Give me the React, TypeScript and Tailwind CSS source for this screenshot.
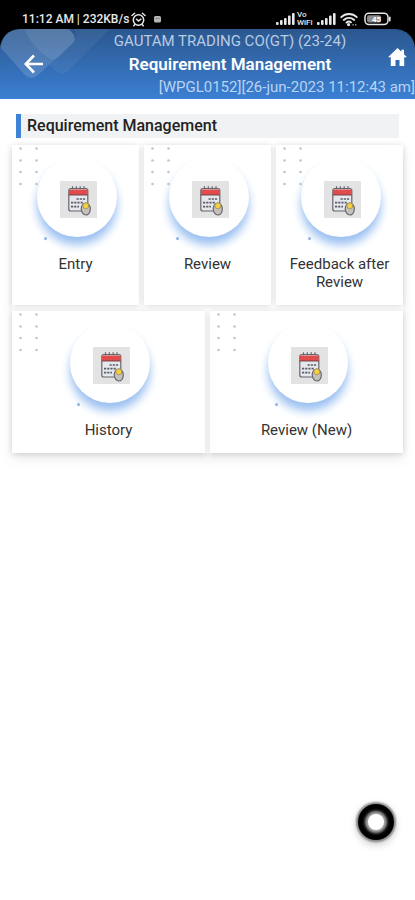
import React from "react";

const topItems = ["Entry", "Review", "Feedback after Review"];
const bottomItems = ["History", "Review (New)"];

function SignalIcon() {
  return (
    <svg width="19" height="14" viewBox="0 0 19 14" fill="#e8e8e8">
      <rect x="0" y="10" width="2.6" height="3" rx="1" />
      <rect x="4" y="8" width="2.6" height="5" rx="1" />
      <rect x="8" y="6" width="2.6" height="7" rx="1" />
      <rect x="12" y="3.5" width="2.6" height="9.5" rx="1" />
      <rect x="16" y="1" width="2.6" height="12" rx="1" />
    </svg>
  );
}

function StatusBar() {
  return (
    <div className="flex h-[29px] items-end justify-between bg-black pr-6 pb-[2px] pl-[22px] text-[#e8e8e8]">
      <div className="flex h-4 items-center gap-0.5">
        <span className="text-[12px] font-medium whitespace-nowrap">
          11:12 AM | 232KB/s
        </span>
        <svg
          width="15"
          height="15"
          viewBox="0 0 15 15"
          fill="none"
          stroke="#e8e8e8"
          strokeWidth="1.5"
          strokeLinecap="round"
        >
          <circle cx="7.5" cy="8" r="5.2" />
          <path d="M1 3.5 3.6 1.3M14 3.5l-2.6-2.2M5.5 7.2l2 1.8 2.4-1.8M3.8 12.6l-1 1.2M11.2 12.6l1 1.2" />
        </svg>
        <svg width="8" height="8" viewBox="0 0 8 8" className="ml-1.5">
          <rect y="1" width="7" height="6.5" rx="1.5" fill="#b4b4b4" />
          <path d="M1.5 3.5h4" stroke="#777" strokeWidth="0.8" />
        </svg>
      </div>
      <div className="flex h-4 items-center">
        <SignalIcon />
        <span className="ml-0.5 w-[18px] text-[8px] leading-[8px] font-medium">
          Vo
          <br />
          WiFi
        </span>
        <span className="ml-0.5">
          <SignalIcon />
        </span>
        <svg
          width="18"
          height="15"
          viewBox="0 0 18 15"
          fill="none"
          stroke="#e8e8e8"
          strokeWidth="1.8"
          strokeLinecap="round"
          className="ml-1"
        >
          <path d="M1.2 5.2C5.6.9 12.4.9 16.8 5.2M3.8 8c3-2.8 7.4-2.8 10.4 0M6.4 10.6c1.5-1.3 3.4-1.3 4.6-.2" />
          <circle cx="8.6" cy="12.6" r="0.7" fill="#e8e8e8" />
          <path d="M13 12.8h.2M15.6 12.8h.2" strokeWidth="1.3" />
        </svg>
        <svg width="27" height="14" viewBox="0 0 27 14" className="ml-1.5">
          <rect
            x="1"
            y="1.2"
            width="23"
            height="11.4"
            rx="4"
            fill="none"
            stroke="#e8e8e8"
            strokeWidth="1.5"
          />
          <rect x="3" y="3.2" width="14" height="7.4" rx="2" fill="#8c8c8c" />
          <rect x="25" y="4.5" width="1.6" height="5" rx="0.8" fill="#e8e8e8" />
          <text
            x="12.5"
            y="9.8"
            textAnchor="middle"
            fontSize="8"
            fontWeight="700"
            fill="#fff"
          >
            45
          </text>
        </svg>
      </div>
    </div>
  );
}

function Header() {
  return (
    <div className="bg-black">
      <header className="relative grid h-[70px] grid-cols-[72px_1fr_27px] grid-rows-[46px_24px] overflow-hidden rounded-t-[20px] bg-linear-to-b from-[#2b578f] to-[#3b80d4] text-white">
        <svg
          width="110"
          height="52"
          viewBox="0 0 110 52"
          className="absolute top-0 left-0"
          fill="#fff"
        >
          <path d="M0 18 8 0h60q9 6 6 13L38 46q-7 6-13 0Z" opacity="0.14" />
          <path d="M25 0h44q8 6 5 13L58 29q-4 3-9 0Q30 17 25 0Z" opacity="0.08" />
          <path d="M74 0h36L68 42q-6 5-12 0l-7-6 25-23q3-7 0-13Z" opacity="0.05" />
        </svg>
        <button
          type="button"
          aria-label="Back"
          className="relative row-span-2 flex items-center pl-6"
        >
          <svg
            width="20"
            height="20"
            viewBox="0 0 20 20"
            fill="none"
            stroke="#fff"
            strokeWidth="2.6"
          >
            <path d="M19 10H2M10 1.5 1.8 10l8.2 8.5" />
          </svg>
        </button>
        <div className="text-center whitespace-nowrap">
          <p className="text-[15px] leading-6 text-[#b9cbe4]">
            GAUTAM TRADING CO(GT) (23-24)
          </p>
          <h1 className="text-[17px] leading-[22px] font-semibold">
            Requirement Management
          </h1>
        </div>
        <button type="button" aria-label="Home" className="flex items-center pt-2.5">
          <svg width="19" height="18" viewBox="0 0 19 18" fill="#fff">
            <path d="M9.5 0 0 9.2h2.8V18h4.7v-6h4v6h4.7V9.2H19l-3-2.9V1.8h-2.6v2Z" />
          </svg>
        </button>
        <p className="col-span-2 text-right text-[15px] leading-6 whitespace-nowrap text-[#b9d3f3]">
          [WPGL0152][26-jun-2023 11:12:43 am]
        </p>
      </header>
    </div>
  );
}

function CalendarIcon() {
  return (
    <svg width="37" height="37" viewBox="0 0 37 37" fill="none">
      <rect width="37" height="37" fill="#e3e3e4" />
      <rect
        x="8.8"
        y="7.5"
        width="19"
        height="22.5"
        rx="2"
        fill="#e6e8ee"
        stroke="#66676d"
        strokeWidth="1.2"
      />
      <path d="M9 8.5h18.6V14H9Z" fill="#e04b4b" />
      <path d="M8.8 14h19" stroke="#6b4046" strokeWidth="0.9" />
      <path
        d="M12.5 5.2v3M16.3 5.2v3M20.2 5.2v3M24 5.2v3"
        stroke="#66676d"
        strokeWidth="1.2"
      />
      <path
        d="M16.5 18h9.5M11 21.7h12M11 25.7h8"
        stroke="#5b5d66"
        strokeWidth="1.7"
        strokeDasharray="2.2 1"
      />
      <path
        d="M25.8 22c3 .8 4.6 3 4.5 6-.1 3.4-2 6-4.4 6s-4.7-2.7-4.7-6c0-3 1.7-5.3 4.6-6Z"
        fill="#c4c0ba"
        stroke="#66676d"
        strokeWidth="1.2"
      />
      <circle cx="25.8" cy="24.8" r="3" fill="#f4cf45" stroke="#8a7a48" strokeWidth="0.6" />
    </svg>
  );
}

function Dots() {
  return (
    <svg
      width="40"
      height="100"
      viewBox="0 0 40 100"
      className="absolute top-0 left-0"
      fill="#b8c6d8"
    >
      {[3.5, 15.5, 27, 39].map((y) => (
        <g key={y}>
          <circle cx="8.5" cy={y} r="1.3" />
          <circle cx="24.5" cy={y} r="1.3" />
        </g>
      ))}
    </svg>
  );
}

function Card({ label }: { label: string }) {
  return (
    <button
      type="button"
      className="relative flex flex-1 flex-col items-center bg-white px-2 pt-3 pb-3.5 shadow-[0_1px_6px_rgba(0,0,0,0.15)]"
    >
      <Dots />
      <span className="relative ml-0.5 flex size-20 shrink-0 items-center justify-center rounded-full bg-white pt-1 pl-1 shadow-[0_8px_10px_#9bc0f1]">
        <CalendarIcon />
        <span className="absolute -bottom-[3px] left-[7px] size-[3px] rounded-full bg-[#8fb2e0]" />
      </span>
      <span className="mt-[18px] text-[15px] leading-[18px] text-[#333]">
        {label}
      </span>
    </button>
  );
}

function App() {
  return (
    <div className="min-h-screen bg-white font-['Roboto','Liberation_Sans',sans-serif]">
      <StatusBar />
      <Header />
      <main className="px-3 pt-[15px]">
        <h2 className="mx-1 border-l-[5px] border-[#3f83d6] bg-[#f0f2f3] pl-1.5 text-[16px] leading-6 font-medium text-[#222]">
          Requirement Management
        </h2>
        <div className="mt-[7px] flex flex-col gap-1.5 shadow-[0_6px_12px_rgba(0,0,0,0.08)]">
          <div className="flex gap-[5px]">
            {topItems.map((item) => (
              <Card key={item} label={item} />
            ))}
          </div>
          <div className="flex gap-[5px]">
            {bottomItems.map((item) => (
              <Card key={item} label={item} />
            ))}
          </div>
        </div>
      </main>
      <button
        type="button"
        aria-label="Assistive touch"
        className="fixed right-[21px] bottom-[60px] flex size-9 items-center justify-center rounded-full bg-black shadow-[0_0_2px_2px_#888,0_3px_10px_rgba(0,0,0,0.3)]"
      >
        <span className="size-4 rounded-full bg-white shadow-[0_0_3px_3px_#aaa]" />
      </button>
    </div>
  );
}

export default App;
